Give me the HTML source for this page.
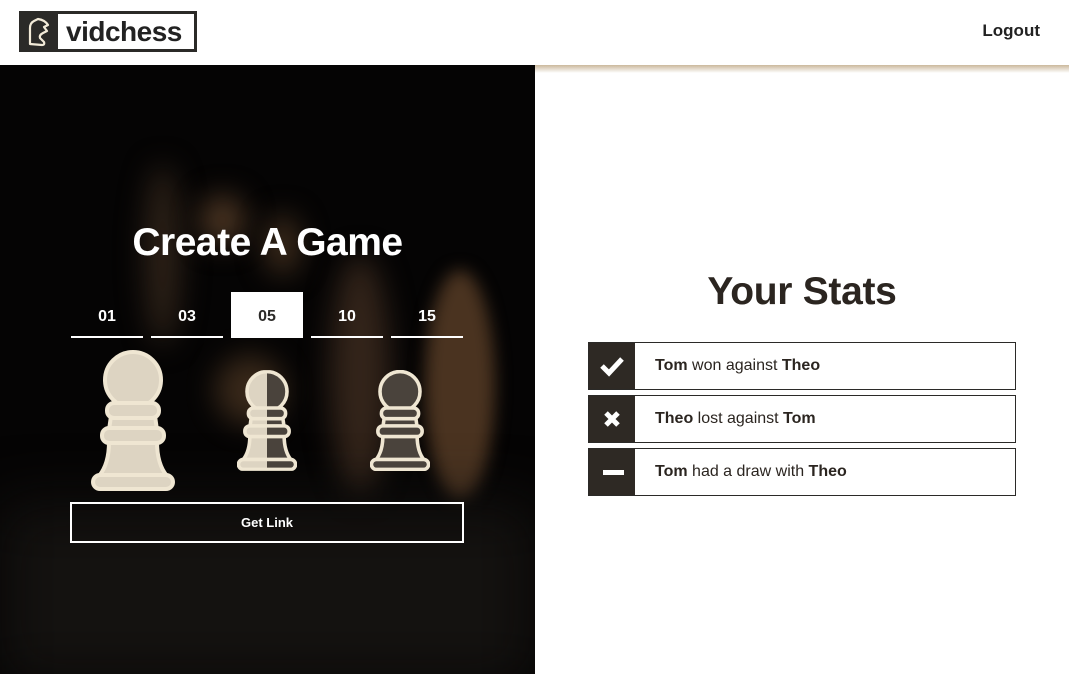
<!DOCTYPE html>
<html><head><meta charset="utf-8"><style>
*{margin:0;padding:0;box-sizing:border-box}
body{width:1069px;height:674px;overflow:hidden;background:#fff;font-family:"Liberation Sans",Arial,sans-serif;position:relative}
.hdr{position:absolute;left:0;top:0;width:1069px;height:65px;background:#fff}
.logo{position:absolute;left:19px;top:11px;width:178px;height:41px;background:#2b2a28;}
.logo .w{position:absolute;left:39px;top:3px;width:136px;height:35px;background:#fff;font-weight:bold;font-size:28px;color:#222;line-height:35px;padding-left:8px;letter-spacing:-0.5px}
.logout{position:absolute;right:29px;top:21px;font-weight:bold;font-size:17px;color:#222}
.left{position:absolute;left:0;top:65px;width:535px;height:609px;background:#050404;overflow:hidden}
.bl{position:absolute;border-radius:50%;filter:blur(14px)}
.shadow{position:absolute;left:535px;top:65px;width:534px;height:8px;background:linear-gradient(#cbb89c,rgba(255,255,255,0))}
h1{position:absolute;left:0;width:535px;top:221px;text-align:center;color:#fff;font-size:39px;font-weight:bold;letter-spacing:-0.5px}
.tab{position:absolute;top:292px;width:72px;height:46px;color:#fff;font-weight:bold;font-size:16px;text-align:center;line-height:50px;border-bottom:2px solid #fff}
.tab.on{background:#fff;color:#2b2a28}
.btn{position:absolute;left:70px;top:502px;width:394px;height:41px;border:2px solid #fff;color:#fff;font-weight:bold;font-size:13px;text-align:center;line-height:37px}
h2{position:absolute;left:535px;width:534px;top:270px;text-align:center;font-size:39px;color:#2b2520;font-weight:bold;letter-spacing:-0.3px}
.row{position:absolute;left:588px;width:428px;height:48px;border:1px solid #2b2a28}
.row .ic{position:absolute;left:0;top:0;width:46px;height:46px;background:#2e2924}
.row .t{position:absolute;left:66px;top:0;line-height:46px;font-size:16px;color:#2b2520}
</style></head><body>
<div class="hdr">
<div class="logo"><svg width="39" height="41" viewBox="0 0 39 41" style="position:absolute;left:0;top:0"><path d="M11 33 L11 17 Q11 12 15 10 L19 8 Q26 9 29 14 L25 16 L28 20 L24 22 Q20 24 21 27 L25 31 Q26 34 23 34 Z" fill="none" stroke="#f2ead8" stroke-width="2.2" stroke-linejoin="round"/></svg><div class="w">vidchess</div></div>
<div class="logout">Logout</div>
</div>
<div class="left">
<div class="bl" style="left:145px;top:100px;width:35px;height:180px;background:#2e2218"></div>
<div class="bl" style="left:200px;top:130px;width:45px;height:50px;background:#4a3422"></div>
<div class="bl" style="left:265px;top:150px;width:35px;height:60px;background:#3e2c1c"></div>
<div class="bl" style="left:330px;top:190px;width:60px;height:240px;background:#33241a"></div>
<div class="bl" style="left:425px;top:205px;width:70px;height:230px;background:#4a3320;filter:blur(8px)"></div>
<div class="bl" style="left:215px;top:290px;width:70px;height:70px;background:#5a4028;opacity:.6"></div>
<div class="bl" style="left:0;top:440px;width:535px;height:180px;background:#141210;border-radius:0;filter:blur(30px)"></div>
</div>
<div class="shadow"></div>
<h1>Create A Game</h1>
<div class="tab" style="left:71px">01</div>
<div class="tab" style="left:151px">03</div>
<div class="tab on" style="left:231px">05</div>
<div class="tab" style="left:311px">10</div>
<div class="tab" style="left:391px">15</div>
<svg style="position:absolute;left:91px;top:350px" width="84" height="141" viewBox="0 0 84 141">
<g stroke="#efe6d2" stroke-width="4" fill="#ddd4c2">
<circle cx="42" cy="30" r="28"/>
<path d="M20 66 L64 66 L66 80 L18 80 Z"/>
<rect x="16" y="53" width="52" height="15" rx="7"/>
<path d="M18 92 L66 92 Q66 114 76 126 L8 126 Q18 114 18 92 Z"/>
<rect x="11" y="78" width="62" height="15" rx="7"/>
<rect x="2" y="125" width="80" height="14" rx="7"/>
</g></svg>
<svg style="position:absolute;left:237px;top:370px" width="60" height="101" viewBox="0 0 84 141">
<defs><clipPath id="lh"><rect x="0" y="0" width="42" height="141"/></clipPath><clipPath id="rh"><rect x="42" y="0" width="42" height="141"/></clipPath></defs>
<g stroke="#efe6d2" stroke-width="5" fill="#ddd4c2" clip-path="url(#lh)">
<circle cx="42" cy="30" r="28"/><path d="M20 66 L64 66 L66 80 L18 80 Z"/><rect x="16" y="53" width="52" height="15" rx="7"/><path d="M18 92 L66 92 Q66 114 76 126 L8 126 Q18 114 18 92 Z"/><rect x="11" y="78" width="62" height="15" rx="7"/><rect x="2" y="125" width="80" height="14" rx="7"/></g>
<g stroke="#efe6d2" stroke-width="5" fill="#4a433c" clip-path="url(#rh)">
<circle cx="42" cy="30" r="28"/><path d="M20 66 L64 66 L66 80 L18 80 Z"/><rect x="16" y="53" width="52" height="15" rx="7"/><path d="M18 92 L66 92 Q66 114 76 126 L8 126 Q18 114 18 92 Z"/><rect x="11" y="78" width="62" height="15" rx="7"/><rect x="2" y="125" width="80" height="14" rx="7"/></g>
</svg>
<svg style="position:absolute;left:370px;top:370px" width="60" height="101" viewBox="0 0 84 141">
<g stroke="#efe6d2" stroke-width="5" fill="#4a433c">
<circle cx="42" cy="30" r="28"/><path d="M20 66 L64 66 L66 80 L18 80 Z"/><rect x="16" y="53" width="52" height="15" rx="7"/><path d="M18 92 L66 92 Q66 114 76 126 L8 126 Q18 114 18 92 Z"/><rect x="11" y="78" width="62" height="15" rx="7"/><rect x="2" y="125" width="80" height="14" rx="7"/></g></svg>
<div class="btn">Get Link</div>
<h2>Your Stats</h2>
<div class="row" style="top:342px"><div class="ic"><svg width="46" height="46"><path d="M13 23 L20 30 L33 16" stroke="#fff" stroke-width="5" fill="none"/></svg></div><div class="t"><b>Tom</b> won against <b>Theo</b></div></div>
<div class="row" style="top:395px"><div class="ic"><svg width="46" height="46"><path d="M17 17 L29 29 M29 17 L17 29" stroke="#fff" stroke-width="5" fill="none"/></svg></div><div class="t"><b>Theo</b> lost against <b>Tom</b></div></div>
<div class="row" style="top:448px"><div class="ic"><svg width="46" height="46"><rect x="14" y="21" width="21" height="5" fill="#fff"/></svg></div><div class="t"><b>Tom</b> had a draw with <b>Theo</b></div></div>
</body></html>
